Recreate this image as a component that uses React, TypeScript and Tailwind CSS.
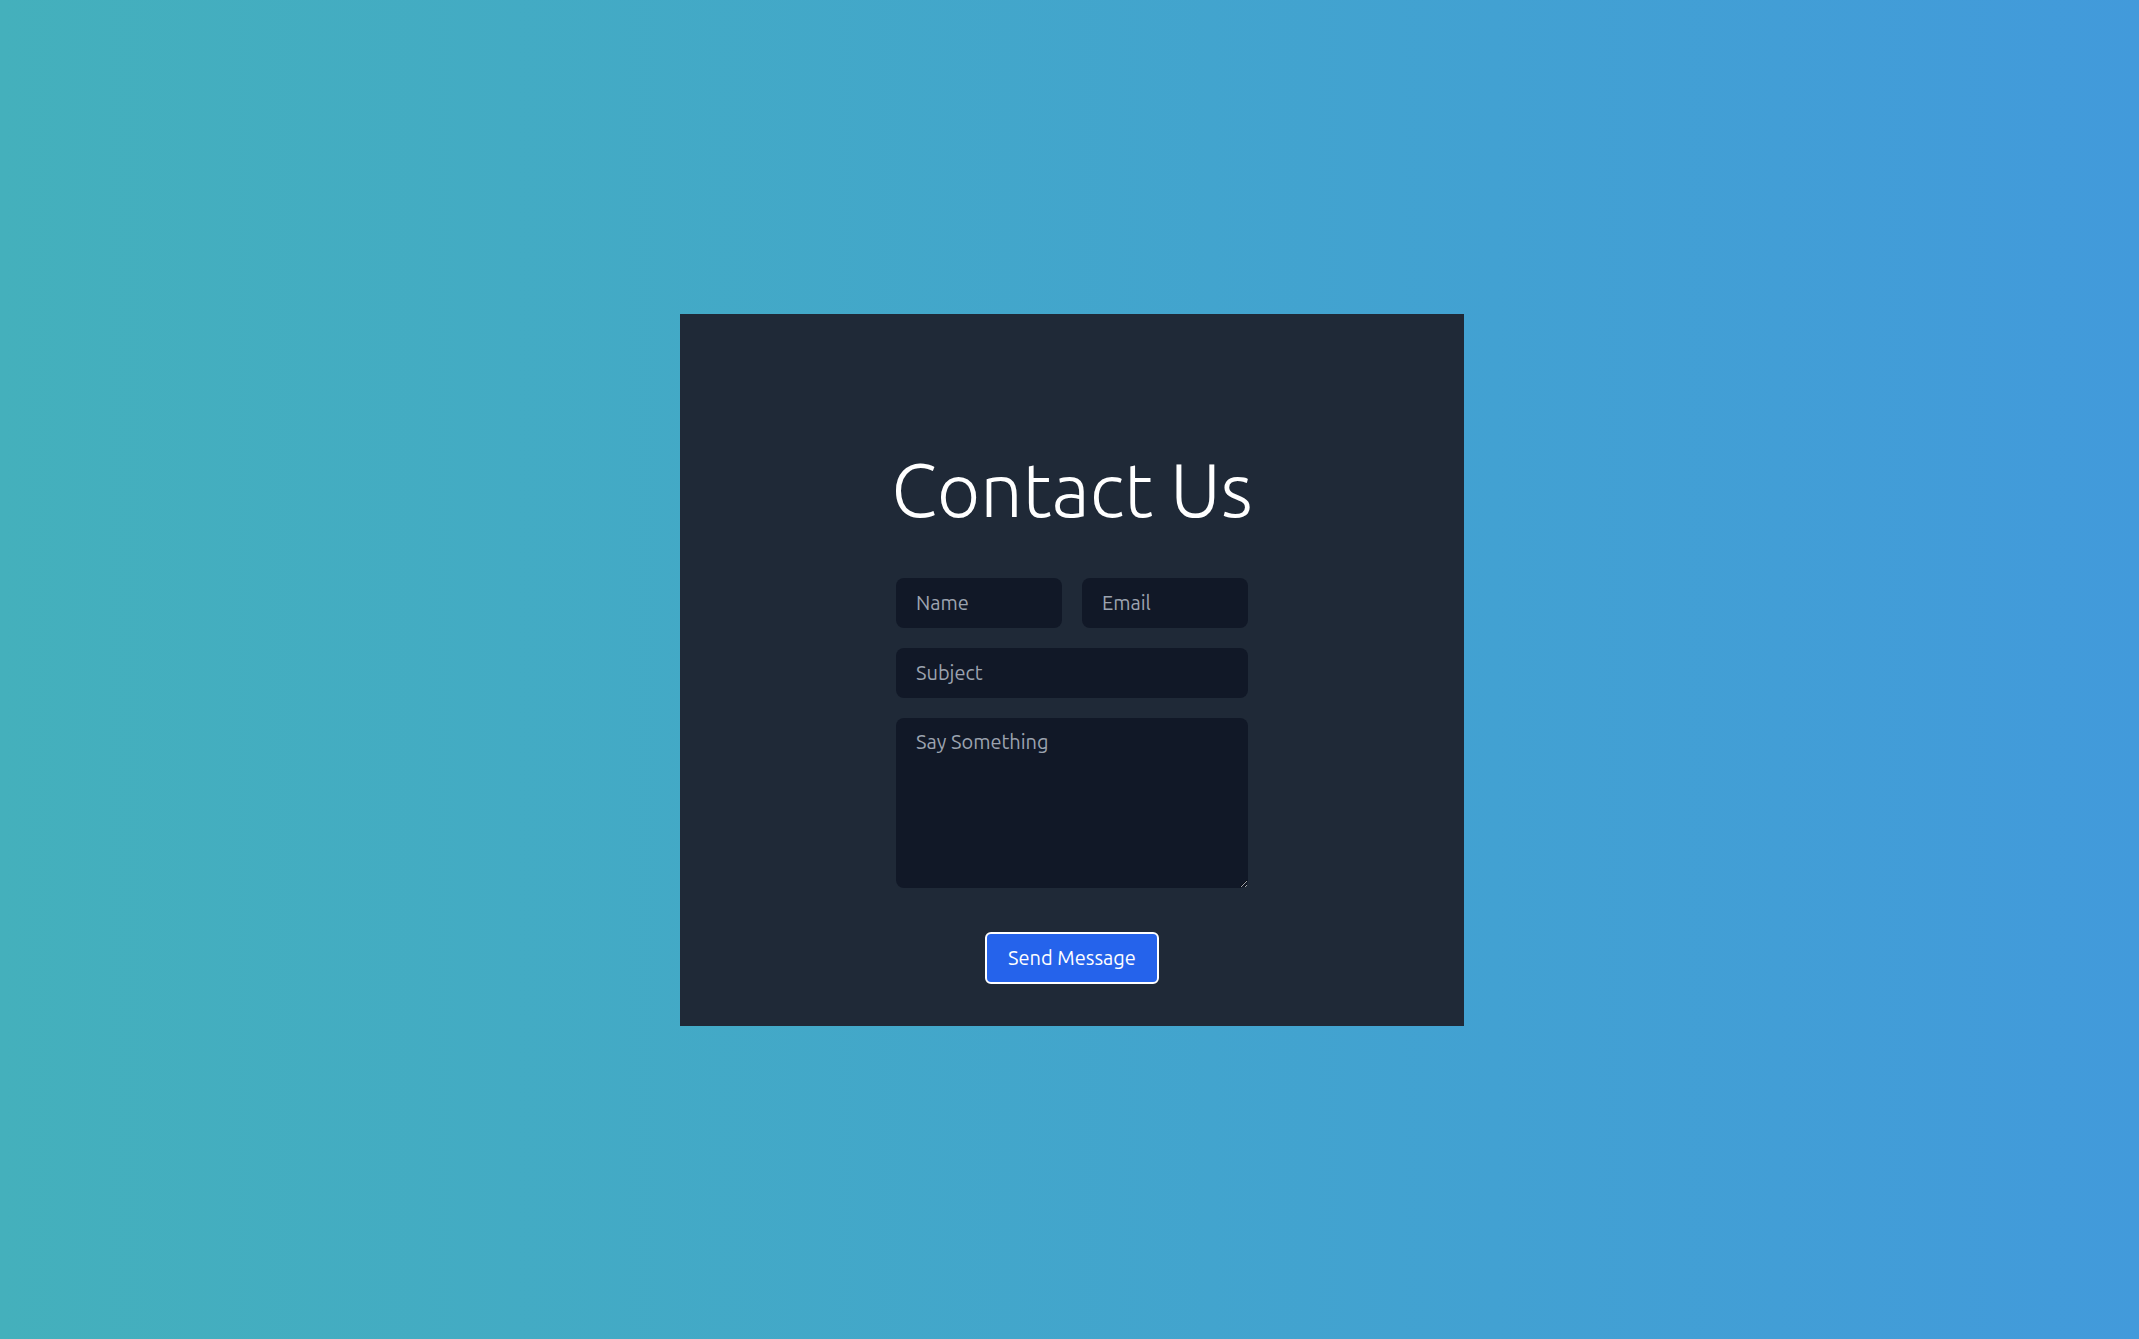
export default function App() {
  return (
    <div
      className="flex min-h-screen w-full items-center justify-center bg-gradient-to-r from-[#44b0bc] to-[#429adb]"
      style={{ fontFamily: '"Ubuntu", "Open Sans", "Noto Sans", sans-serif' }}
    >
      <div className="ml-[5px] flex h-[712px] w-[784px] flex-col items-center bg-[#1f2937] pt-[138px]">
        <h1 className="text-[75px] font-light leading-none text-white">Contact Us</h1>

        <form
          className="mt-[51px] flex w-[352px] flex-col gap-5"
          onSubmit={(e) => e.preventDefault()}
        >
          <div className="flex gap-5">
            <input
              type="text"
              placeholder="Name"
              className="h-[50px] w-0 flex-1 rounded-lg bg-[#111827] px-5 text-[20px] text-white outline-none placeholder:text-[#9ca3af]"
            />
            <input
              type="email"
              placeholder="Email"
              className="h-[50px] w-0 flex-1 rounded-lg bg-[#111827] px-5 text-[20px] text-white outline-none placeholder:text-[#9ca3af]"
            />
          </div>
          <input
            type="text"
            placeholder="Subject"
            className="h-[50px] w-full rounded-lg bg-[#111827] px-5 text-[20px] text-white outline-none placeholder:text-[#9ca3af]"
          />
          <textarea
            placeholder="Say Something"
            className="h-[170px] w-full rounded-lg bg-[#111827] px-5 pt-[9px] pb-3 text-[20px] text-white outline-none placeholder:text-[#9ca3af]"
          />
        </form>

        <button
          type="submit"
          className="mt-[44px] h-[52px] w-[174px] rounded-md border-2 border-white bg-[#2563eb] text-[20px] text-white"
        >
          Send Message
        </button>
      </div>
    </div>
  );
}
